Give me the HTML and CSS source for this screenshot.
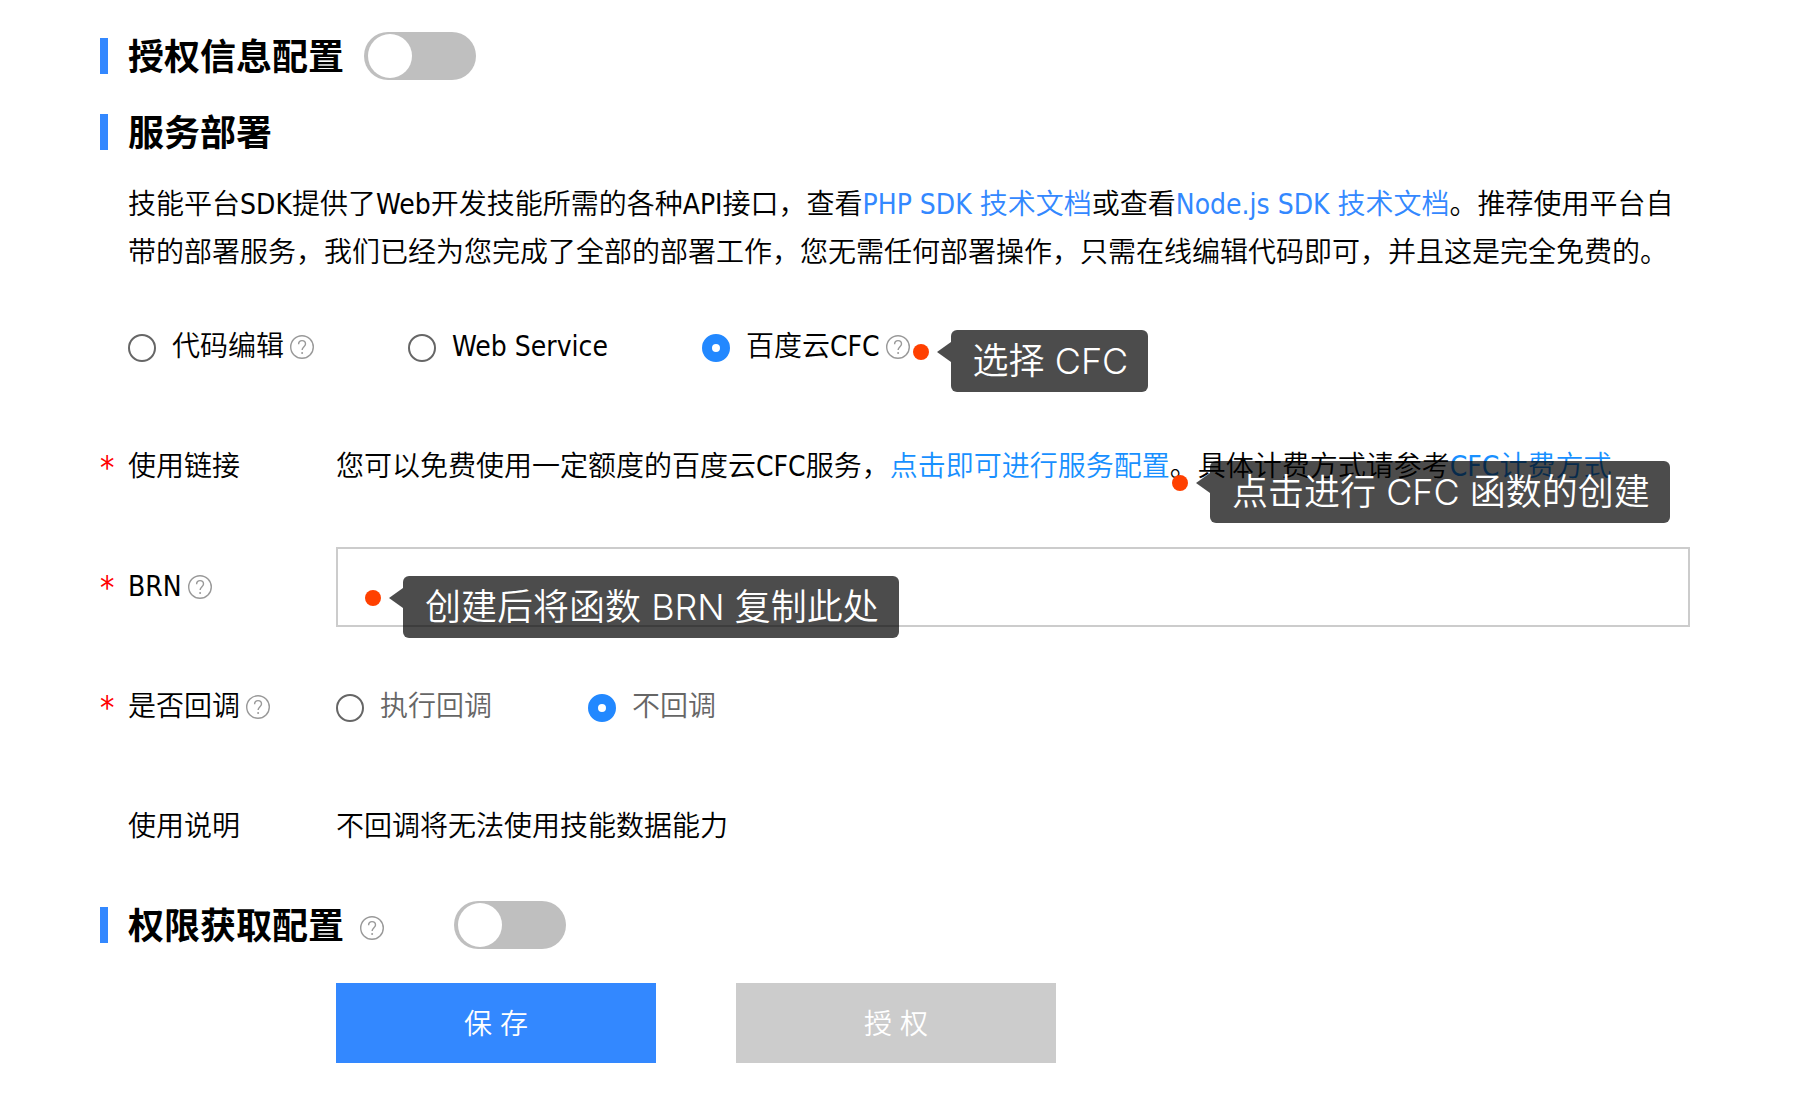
FILE: index.html
```html
<!DOCTYPE html>
<html lang="zh-CN">
<head>
    <meta charset="UTF-8">
    <meta name="viewport" content="width=device-width, initial-scale=1.0">
    <title>服务部署</title>
    <link rel="stylesheet" href="styles.css">
</head>
<body>
    <svg class="sprite" aria-hidden="true">
        <symbol id="help" viewBox="0 0 24 24">
            <circle cx="12" cy="12" r="11.3" fill="none" stroke="#999" stroke-width="1.4"/>
            <path d="M8.6 9.2C8.6 7 10 5.6 12 5.6s3.5 1.3 3.5 3.3c0 2.6-3.4 3-3.4 6.2" fill="none" stroke="#999" stroke-width="1.4"/>
            <circle cx="12.1" cy="18" r="1" fill="#999"/>
        </symbol>
    </svg>

    <form class="config">
        <div class="section-head">
            <h2>授权信息配置</h2>
            <input type="checkbox" class="switch" id="authSwitch" aria-label="授权信息配置">
        </div>

        <div class="section-head">
            <h2>服务部署</h2>
        </div>

        <p class="intro">技能平台SDK提供了Web开发技能所需的各种API接口，查看<a href="#">PHP SDK 技术文档</a>或查看<a href="#">Node.js SDK 技术文档</a>。推荐使用平台自带的部署服务，我们已经为您完成了全部的部署工作，您无需任何部署操作，只需在线编辑代码即可，并且这是完全免费的。</p>

        <div class="rows">
            <div class="row deploy">
                <div class="option">
                    <label><input type="radio" name="deploy">代码编辑</label>
                    <svg class="help"><use href="#help"/></svg>
                </div>
                <div class="option">
                    <label><input type="radio" name="deploy">Web Service</label>
                </div>
                <div class="option">
                    <label><input type="radio" name="deploy" checked>百度云CFC</label>
                    <svg class="help"><use href="#help"/></svg>
                    <div class="callout callout-cfc"><span>选择 CFC</span></div>
                </div>
            </div>

            <div class="row">
                <div class="name required">使用链接</div>
                <div class="value">
                    您可以免费使用一定额度的百度云CFC服务，<a href="#" class="link">点击即可进行服务配置</a>。具体计费方式请参考<a href="#" class="link">CFC计费方式</a>
                    <div class="callout callout-create"><span>点击进行 CFC 函数的创建</span></div>
                </div>
            </div>

            <div class="row">
                <div class="name required"><label for="brn">BRN</label><svg class="help"><use href="#help"/></svg></div>
                <div class="value">
                    <input type="text" class="text" id="brn" name="brn">
                    <div class="callout callout-brn"><span>创建后将函数 BRN 复制此处</span></div>
                </div>
            </div>

            <div class="row">
                <div class="name required">是否回调<svg class="help"><use href="#help"/></svg></div>
                <div class="value callback">
                    <label><input type="radio" name="callback">执行回调</label>
                    <label><input type="radio" name="callback" checked>不回调</label>
                </div>
            </div>

            <div class="row">
                <div class="name">使用说明</div>
                <div class="value">不回调将无法使用技能数据能力</div>
            </div>
        </div>

        <div class="section-head">
            <h2>权限获取配置</h2>
            <svg class="help"><use href="#help"/></svg>
            <input type="checkbox" class="switch switch-far" id="permSwitch" aria-label="权限获取配置">
        </div>

        <div class="buttons">
            <button type="submit">保 存</button>
            <button type="button" disabled>授 权</button>
        </div>
    </form>
</body>
</html>
```
FILE: styles.css
```css
* {
    box-sizing: border-box;
}

body {
    margin: 0;
    background-color: #fff;
    color: #000;
    font-family: "DejaVu Sans Condensed", "Noto Sans CJK SC", sans-serif;
    font-size: 28px;
    font-weight: 350;
    line-height: 48px;
}

a {
    color: #3388ff;
    text-decoration: none;
}

.sprite {
    display: none;
}

.config {
    padding: 32px 108px 32px 100px;
}

.section-head {
    display: flex;
    align-items: center;
    height: 48px;
    margin-bottom: 25px;
}

.section-head + .section-head {
    margin-top: 28px;
}

.section-head h2 {
    margin: 0;
    padding: 4px 0 0 20px;
    border-left: 8px solid #3388ff;
    font-size: 36px;
    font-weight: bold;
    line-height: 32px;
}

.section-head .help {
    margin: 5px 0 0 16px;
}

.switch {
    appearance: none;
    width: 112px;
    height: 48px;
    margin: 0 0 0 20px;
    padding: 2px 4px;
    border-radius: 24px;
    background-color: #bfbfbf;
    cursor: pointer;
}

.switch::before {
    content: "";
    display: block;
    width: 44px;
    height: 44px;
    border-radius: 50%;
    background-color: #fff;
}

.switch:checked {
    background-color: #3388ff;
}

.switch:checked::before {
    margin-left: auto;
}

.switch-far {
    margin-left: 70px;
}

.intro {
    margin: 0 0 30px 28px;
}

.help {
    flex: none;
    width: 24px;
    height: 24px;
    margin-left: 6px;
    overflow: visible;
}

.rows {
    display: flex;
    flex-direction: column;
    gap: 40px;
    margin-bottom: 34px;
}

.row {
    display: flex;
    align-items: center;
    min-height: 80px;
}

.deploy {
    gap: 94px;
    padding-left: 28px;
}

.option,
.row label {
    display: flex;
    align-items: center;
}

.option {
    position: relative;
}

input[type="radio"] {
    appearance: none;
    width: 28px;
    height: 28px;
    margin: 2px 16px 0 0;
    border: 2px solid #666;
    border-radius: 50%;
    background-color: #fff;
}

input[type="radio"]:checked {
    border: 10px solid #2288ff;
}

.name {
    position: relative;
    display: flex;
    flex: none;
    align-items: center;
    width: 236px;
    padding-left: 28px;
}

.required::before {
    content: "*";
    position: absolute;
    left: 0;
    color: #f00;
    font-size: 32px;
    line-height: 44px;
}

.value {
    position: relative;
    flex: 1;
}

.link {
    color: #1890ff;
}

.text {
    display: block;
    width: 100%;
    height: 80px;
    padding: 0 24px;
    border: 2px solid #ccc;
    font: inherit;
}

.callback {
    display: flex;
    gap: 96px;
    color: #666;
}

/* red dot + arrow + dark bubble */
.callout {
    position: absolute;
    z-index: 1;
    padding-left: 38px;
    color: #fff;
    font-family: Inter, "Noto Sans CJK SC", sans-serif;
    font-size: 36px;
    line-height: 62px;
    white-space: nowrap;
}

.callout span {
    display: block;
    padding: 0 20px 0 22px;
    border-radius: 6px;
    background-color: rgba(0, 0, 0, 0.7);
}

.callout::before {
    content: "";
    position: absolute;
    top: 14px;
    left: 0;
    width: 16px;
    height: 16px;
    border-radius: 50%;
    background-color: #ff4000;
}

.callout::after {
    content: "";
    position: absolute;
    top: 12px;
    left: 24px;
    border: 10px solid transparent;
    border-right: 14px solid rgba(0, 0, 0, 0.7);
    border-left: 0;
}

.callout-cfc {
    top: 7px;
    left: calc(100% + 3px);
}

.callout-create {
    top: 18px;
    left: 836px;
}

.callout-brn {
    top: 29px;
    left: 29px;
}

.buttons {
    display: flex;
    gap: 80px;
    padding: 9px 0 0 236px;
}

button {
    width: 320px;
    height: 80px;
    padding: 4px 0 0;
    border: none;
    background-color: #3388ff;
    color: #fff;
    font: inherit;
    cursor: pointer;
}

button:disabled {
    background-color: #ccc;
    cursor: default;
}
```
